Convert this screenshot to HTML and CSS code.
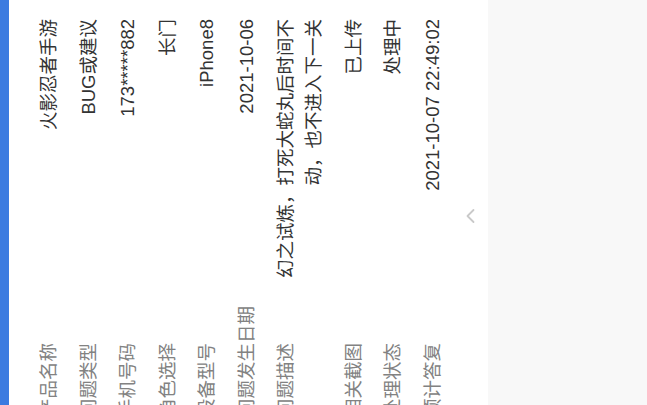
FILE: index.html
```html
<!DOCTYPE html>
<html lang="zh-CN">
<head>
<meta charset="utf-8">
<title>问题详情</title>
<link rel="stylesheet" href="styles.css">
</head>
<body>
<div class="screen">
  <div class="page">
    <div class="topbar"></div>
    <div class="card">
      <div class="rows">
        <div class="row"><div class="label">产品名称</div><div class="value">火影忍者手游</div></div>
        <div class="row"><div class="label">问题类型</div><div class="value">BUG或建议</div></div>
        <div class="row"><div class="label">手机号码</div><div class="value">173*****882</div></div>
        <div class="row"><div class="label">角色选择</div><div class="value">长门</div></div>
        <div class="row"><div class="label">设备型号</div><div class="value">iPhone8</div></div>
        <div class="row"><div class="label">问题发生日期</div><div class="value">2021-10-06</div></div>
        <div class="row"><div class="label">问题描述</div><div class="value">幻之试炼，打死大蛇丸后时间不动，也不进入下一关</div></div>
        <div class="row"><div class="label">相关截图</div><div class="value">已上传</div></div>
        <div class="row"><div class="label">处理状态</div><div class="value">处理中</div></div>
        <div class="row"><div class="label">预计答复</div><div class="value">2021-10-07 22:49:02</div></div>
      </div>
      <div class="toggle">
        <svg class="chev" width="16" height="10" viewBox="0 0 16 10"><path d="M2 8.5 L8 2.5 L14 8.5" fill="none" stroke="#c9c9c9" stroke-width="1.8" stroke-linecap="round" stroke-linejoin="round"/></svg>
      </div>
    </div>
  </div>
</div>
</body>
</html>
```
FILE: styles.css
```css
html, body {
  margin: 0;
  padding: 0;
  background: #f8f8f8;
}
body {
  width: 647px;
  height: 405px;
  overflow: hidden;
  font-family: "Liberation Sans", "Noto Sans CJK SC", sans-serif;
}
.screen {
  width: 647px;
  height: 405px;
  overflow: hidden;
}
.page {
  width: 433px;
  height: 647px;
  background: #f8f8f8;
  transform-origin: top left;
  transform: translateY(433px) rotate(-90deg);
}
.topbar {
  height: 8.5px;
  background: #3b7be0;
}
.card {
  background: #ffffff;
  padding-top: 20.75px;
}
.rows {
  padding: 0 19px 0 16px;
}
.row {
  display: flex;
  gap: 16px;
  padding: 5.75px 0;
  font-size: 18.5px;
  line-height: 28px;
}
.label {
  width: 116px;
  flex: none;
  color: #828282;
  white-space: nowrap;
}
.value {
  flex: 1;
  color: #333333;
  text-align: right;
}
.toggle {
  height: 36px;
  display: flex;
  align-items: center;
  justify-content: center;
}
.chev {
  display: block;
}
```
